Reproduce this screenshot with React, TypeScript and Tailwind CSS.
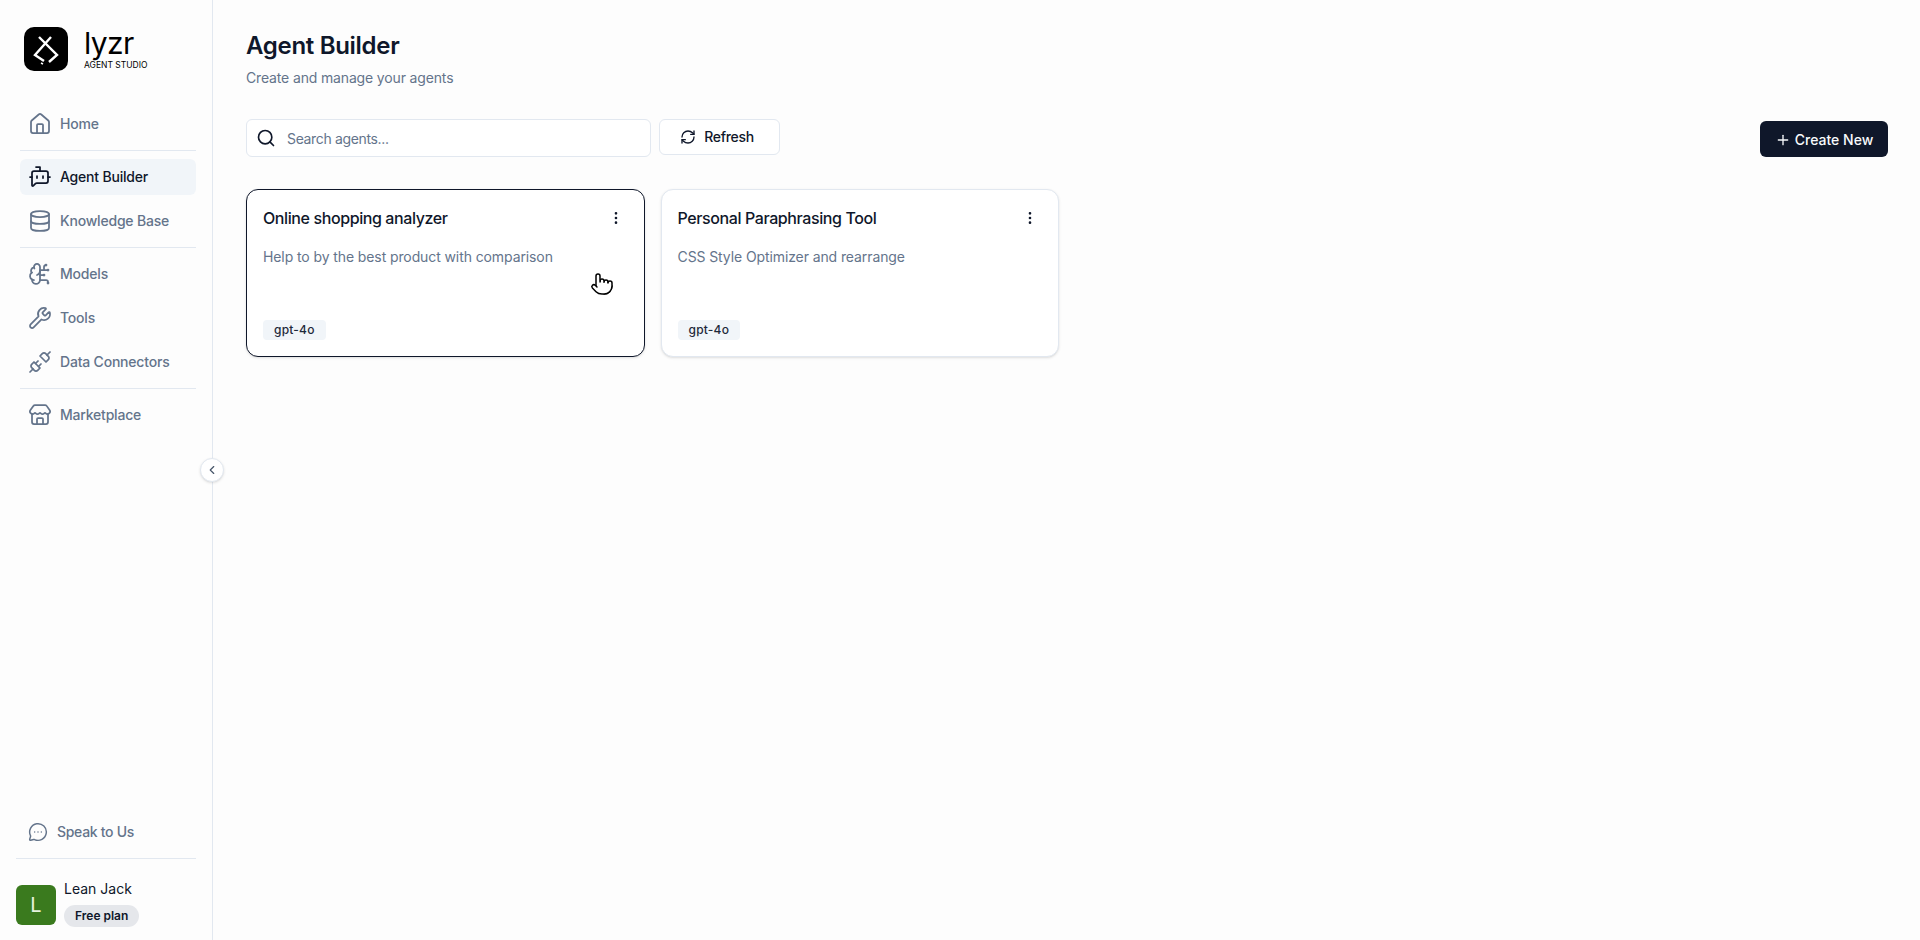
import {
  BotMessageSquare,
  BrainCircuit,
  ChevronLeft,
  Database,
  EllipsisVertical,
  House,
  MessageCircleMore,
  Plus,
  Pointer,
  RefreshCw,
  Search,
  Store,
  Unplug,
  Wrench,
} from "lucide-react";

const groups = [
  [{ label: "Home", icon: House }],
  [
    { label: "Agent Builder", icon: BotMessageSquare, active: true },
    { label: "Knowledge Base", icon: Database },
  ],
  [
    { label: "Models", icon: BrainCircuit },
    { label: "Tools", icon: Wrench },
    { label: "Data Connectors", icon: Unplug },
  ],
  [{ label: "Marketplace", icon: Store }],
];

const agents = [
  {
    name: "Online shopping analyzer",
    description: "Help to by the best product with comparison",
    hovered: true,
  },
  {
    name: "Personal Paraphrasing Tool",
    description: "CSS Style Optimizer and rearrange",
  },
];

const Logo = () => (
  <div className="flex items-center gap-4 pl-6 pt-[27px]">
    <div className="flex h-11 w-11 items-center justify-center rounded-[10px] bg-black">
      <svg viewBox="0 0 44 44" className="h-11 w-11" fill="none" stroke="white" strokeWidth="2.4">
        <path d="M27 10 L11 28 L20 34" />
        <path d="M15 10 L33 28 L25 35" />
        <path d="M17 36 L19 37" strokeWidth="1.5" />
      </svg>
    </div>
    <div className="flex flex-col text-black">
      <span className="text-[30px] font-normal leading-[30px] tracking-[-0.6px]">lyzr</span>
      <span className="mt-[2px] text-[8.5px] font-normal leading-[10px]">AGENT STUDIO</span>
    </div>
  </div>
);

const Sidebar = () => (
  <aside className="relative flex h-[940px] w-[213px] shrink-0 flex-col border-r border-[#e2e8f0]">
    <Logo />
    <nav className="mt-[35px] flex flex-col pl-5 pr-4">
      {groups.map((group, i) => (
        <div key={i} className="flex flex-col">
          {i > 0 && <div className="my-2 h-px bg-[#e2e8f0]" />}
          <div className="flex flex-col gap-2">
            {group.map((item) => (
              <div
                key={item.label}
                className={
                  item.active
                    ? "flex h-9 items-center gap-2 rounded-md bg-[#f1f5f9] px-2 text-sm font-medium tracking-[-0.2px] text-[#0f172a]"
                    : "flex h-9 items-center gap-2 rounded-md px-2 text-sm font-medium tracking-[-0.2px] text-[#64748b]"
                }
              >
                <item.icon className="h-6 w-6 shrink-0" strokeWidth={1.75} />
                <span>{item.label}</span>
              </div>
            ))}
          </div>
        </div>
      ))}
    </nav>

    <div className="mt-auto flex flex-col px-4 pb-[13px]">
      <div className="flex h-9 items-center gap-[9px] pl-[12px] text-sm font-medium tracking-[-0.3px] text-[#64748b]">
        <MessageCircleMore className="h-5 w-5" strokeWidth={1.75} />
        <span>Speak to Us</span>
      </div>
      <div className="mt-2 h-px bg-[#e2e8f0]" />
      <div className="mt-[26px] flex gap-2">
        <div className="flex h-10 w-10 items-center justify-center rounded-md bg-[#3a7a1e] text-xl text-[#e6f2df]">
          L
        </div>
        <div className="-mt-[5px] flex flex-col items-start">
          <span className="text-sm leading-[18px] text-[#0f172a]">Lean Jack</span>
          <span className="mt-[7px] rounded-full bg-[#e5e7eb] px-[11px] py-[3px] text-xs font-semibold leading-4 text-[#0f172a]">
            Free plan
          </span>
        </div>
      </div>
    </div>

    <button className="absolute left-[200px] top-[458px] flex h-6 w-6 items-center justify-center rounded-full border border-[#e2e8f0] bg-white text-[#475569] shadow-sm">
      <ChevronLeft className="h-3.5 w-3.5" />
    </button>
  </aside>
);

const AgentCard = ({ name, description, hovered }: (typeof agents)[number]) => (
  <div
    className={
      hovered
        ? "relative flex h-[168px] flex-col rounded-xl border border-[#0f172a] bg-white p-4 shadow-sm"
        : "relative flex h-[168px] flex-col rounded-xl border border-[#e2e8f0] bg-white p-4 shadow-sm"
    }
  >
    <div className="flex items-center justify-between">
      <h3 className="text-base font-medium leading-6 tracking-[-0.4px] text-[#0f172a]">{name}</h3>
      <EllipsisVertical className="mr-1 h-4 w-4 text-[#0f172a]" />
    </div>
    <p className="mt-[17px] text-sm leading-5 tracking-[-0.1px] text-[#64748b]">{description}</p>
    <span className="mt-auto self-start rounded bg-[#f1f5f9] px-[11px] py-[2px] text-xs font-medium leading-4 tracking-[0.2px] text-[#1e293b]">
      gpt-4o
    </span>
    {hovered && (
      <Pointer className="absolute left-[343px] top-[82px] h-6 w-6 fill-white text-black" strokeWidth={1.5} />
    )}
  </div>
);

export default function App() {
  return (
    <div className="flex h-[940px] w-[1920px] overflow-hidden bg-[#fdfdfd] font-['Inter',sans-serif]">
      <Sidebar />
      <main className="flex flex-1 flex-col pl-[33px] pr-8 pt-[30px]">
        <h1 className="text-2xl font-semibold leading-8 tracking-[-0.3px] text-[#0f172a]">Agent Builder</h1>
        <p className="mt-[6px] text-sm leading-5 tracking-[-0.15px] text-[#64748b]">Create and manage your agents</p>

        <div className="mt-[31px] flex items-start">
          <div className="flex h-[38px] w-[405px] items-center gap-[11px] rounded-md border border-[#e2e8f0] bg-white px-[9px]">
            <Search className="h-5 w-5 text-[#0f172a]" strokeWidth={2} />
            <span className="mt-px text-sm tracking-[-0.35px] text-[#64748b]">Search agents...</span>
          </div>
          <button className="ml-2 flex h-9 w-[121px] items-center justify-center gap-2 rounded-md border border-[#e2e8f0] bg-white pr-[5px] text-sm font-medium tracking-[-0.3px] text-[#0f172a]">
            <RefreshCw className="h-4 w-4" strokeWidth={2} />
            Refresh
          </button>
          <button className="ml-auto mt-[2px] flex h-9 w-32 items-center justify-center gap-1 rounded-md bg-[#0f172a] pt-px text-sm font-medium text-[#f8fafc]">
            <Plus className="h-4 w-4" />
            Create New
          </button>
        </div>

        <div className="mt-8 grid grid-cols-4 gap-4">
          {agents.map((agent) => (
            <AgentCard key={agent.name} {...agent} />
          ))}
        </div>
      </main>
    </div>
  );
}
